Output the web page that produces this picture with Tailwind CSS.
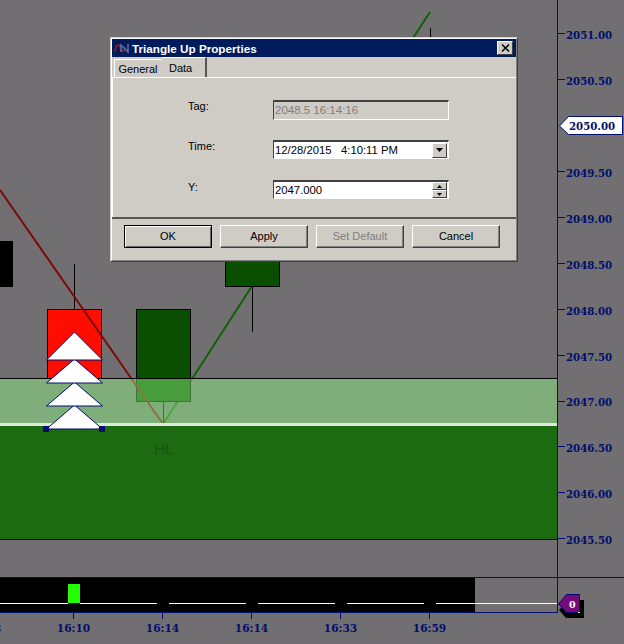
<!DOCTYPE html>
<html lang="en">
<head>
  <meta charset="UTF-8" />
  <title>Triangle Up Properties</title>
  <script src="https://cdn.jsdelivr.net/npm/@tailwindcss/browser@4"></script>
</head>
<body class="m-0 bg-[#716f71] overflow-hidden">
  <div class="relative w-[624px] h-[644px] overflow-hidden bg-[#716f71]">

    <!-- chart + price axis -->
    <div class="flex h-[577px]">
      <div class="relative w-[557px] h-[577px] overflow-hidden">
        <!-- green swing goes behind the candles -->
        <svg class="absolute left-0 top-0" width="557" height="577">
          <path d="M163 424L252 286L430 12" fill="none" stroke="#125f0a" stroke-width="2" />
        </svg>

        <!-- candles -->
        <div class="absolute left-[-10px] top-[241px] w-[23px] h-[46px] bg-black"></div>
        <div class="absolute left-[74px] top-[264px] w-px h-[45px] bg-black"></div>
        <div class="absolute left-[47px] top-[309px] w-[55px] h-[70px] bg-[#ff0d00] border border-black"></div>
        <div class="absolute left-[136px] top-[309px] w-[55px] h-[93px] bg-[#0a4f00] border border-black"></div>
        <div class="absolute left-[163px] top-[402px] w-px h-[22px] bg-black"></div>
        <div class="absolute left-[225px] top-[240px] w-[55px] h-[47px] bg-[#0a4f00] border border-black"></div>
        <div class="absolute left-[252px] top-[287px] w-px h-[45px] bg-black"></div>
        <div class="absolute left-[430px] top-[28px] w-px h-[14px] bg-black"></div>

        <svg class="absolute left-0 top-0" width="557" height="577">
          <path d="M0 190L163 424" fill="none" stroke="#7c0a0a" stroke-width="2" />
        </svg>

        <!-- zone -->
        <div class="absolute left-0 top-[378px] w-[557px] h-[162px] flex flex-col border-t border-b border-black">
          <div class="h-[44px] bg-[#93fb85]/45"></div>
          <div class="h-[3px] bg-[#dfe8dc]"></div>
          <div class="flex-1 bg-[#1d6b10]"></div>
        </div>
        <div class="absolute left-[154px] top-[440px] text-[15px] leading-[18px] text-[#14580c] font-['Liberation_Sans',sans-serif]">HL</div>

        <!-- triangle markers, bottom one first -->
        <svg class="absolute left-0 top-0" width="557" height="577">
          <g fill="#ffffff" stroke="#000e6e" stroke-width="1">
            <path d="M74.5 405L102.5 429H46.5Z" />
            <path d="M74.5 382L102.5 406H46.5Z" />
            <path d="M74.5 359L102.5 383H46.5Z" />
            <path d="M74.5 332L102.5 360H46.5Z" />
          </g>
          <rect x="43" y="426" width="6" height="6" fill="#000e6e" />
          <rect x="99" y="426" width="6" height="6" fill="#000e6e" />
        </svg>
      </div>

      <!-- price axis -->
      <div class="relative w-[67px] h-[577px] border-l border-[#000e6e] pt-[11px] text-[#000e6e] font-['DejaVu_Serif',serif] font-bold text-[10.2px]">
        <div class="flex items-center h-[45.9px]"><span class="w-[7px] h-px bg-[#000e6e] mr-px"></span><span class="relative top-[2px]">2051.00</span></div>
        <div class="flex items-center h-[45.9px]"><span class="w-[7px] h-px bg-[#000e6e] mr-px"></span><span class="relative top-[2px]">2050.50</span></div>
        <div class="relative flex items-center h-[45.9px]">
          <!-- current price tag -->
          <svg class="absolute left-[1px] top-[13px]" width="64" height="20"><path d="M0.5 10L9.5 0.5H63.5V18.5H9.5Z" fill="#ffffff" stroke="#000e6e" /></svg>
          <span class="relative top-[1px] ml-[11px]">2050.00</span>
        </div>
        <div class="flex items-center h-[45.9px]"><span class="w-[7px] h-px bg-[#000e6e] mr-px"></span><span class="relative top-[2px]">2049.50</span></div>
        <div class="flex items-center h-[45.9px]"><span class="w-[7px] h-px bg-[#000e6e] mr-px"></span><span class="relative top-[2px]">2049.00</span></div>
        <div class="flex items-center h-[45.9px]"><span class="w-[7px] h-px bg-[#000e6e] mr-px"></span><span class="relative top-[2px]">2048.50</span></div>
        <div class="flex items-center h-[45.9px]"><span class="w-[7px] h-px bg-[#000e6e] mr-px"></span><span class="relative top-[2px]">2048.00</span></div>
        <div class="flex items-center h-[45.9px]"><span class="w-[7px] h-px bg-[#000e6e] mr-px"></span><span class="relative top-[2px]">2047.50</span></div>
        <div class="flex items-center h-[45.9px]"><span class="w-[7px] h-px bg-[#000e6e] mr-px"></span><span class="relative top-[2px]">2047.00</span></div>
        <div class="flex items-center h-[45.9px]"><span class="w-[7px] h-px bg-[#000e6e] mr-px"></span><span class="relative top-[2px]">2046.50</span></div>
        <div class="flex items-center h-[45.9px]"><span class="w-[7px] h-px bg-[#000e6e] mr-px"></span><span class="relative top-[2px]">2046.00</span></div>
        <div class="flex items-center h-[45.9px]"><span class="w-[7px] h-px bg-[#000e6e] mr-px"></span><span class="relative top-[2px]">2045.50</span></div>
      </div>
    </div>

    <!-- indicator panel -->
    <div class="relative h-[36px] border-t border-[#000e6e]">
      <div class="flex h-[34px]">
        <div class="w-[475px] bg-black"></div>
      </div>
      <div class="absolute left-[68px] top-[6px] w-[12px] h-[19px] bg-[#22ff00]"></div>
      <div class="absolute left-0 top-[25px] w-[557px] flex h-px">
        <div class="w-[68px] bg-white"></div>
        <div class="w-[12px]"></div>
        <div class="w-[77px] bg-white"></div>
        <div class="w-[12px]"></div>
        <div class="w-[77px] bg-white"></div>
        <div class="w-[12px]"></div>
        <div class="w-[77px] bg-white"></div>
        <div class="w-[12px]"></div>
        <div class="w-[77px] bg-white"></div>
        <div class="w-[12px]"></div>
        <div class="flex-1 bg-white"></div>
      </div>
      <div class="w-[558px] h-px bg-[#000e6e]"></div>
      <div class="absolute left-[557px] top-[-1px] w-px h-[36px] bg-[#000e6e]"></div>

      <!-- zero tag -->
      <svg class="absolute left-[557px] top-[15px]" width="30" height="28">
        <path d="M2 17L8 11L11 7H27V25H9Z" fill="#000000" />
        <path d="M1.5 11L9.5 1.5H22.5V19.5H9.5Z" fill="#750a7a" stroke="#000e6e" />
        <rect x="21" y="19" width="2" height="1" fill="#ffffff" />
      </svg>
      <span class="absolute left-[569px] top-[20px] text-[9.5px] leading-[13px] font-bold text-white font-['DejaVu_Serif',serif]">0</span>
    </div>

    <!-- time axis -->
    <div class="flex ml-[-60px] text-[#000e6e] font-['DejaVu_Serif',serif] font-bold text-[10.6px]">
      <div class="flex flex-col items-center w-[89px]"><span class="w-px h-[6px] bg-[#000e6e]"></span><span class="mt-[3px] leading-[13px]">16:08</span></div>
      <div class="flex flex-col items-center w-[89px]"><span class="w-px h-[6px] bg-[#000e6e]"></span><span class="mt-[3px] leading-[13px]">16:10</span></div>
      <div class="flex flex-col items-center w-[89px]"><span class="w-px h-[6px] bg-[#000e6e]"></span><span class="mt-[3px] leading-[13px]">16:14</span></div>
      <div class="flex flex-col items-center w-[89px]"><span class="w-px h-[6px] bg-[#000e6e]"></span><span class="mt-[3px] leading-[13px]">16:14</span></div>
      <div class="flex flex-col items-center w-[89px]"><span class="w-px h-[6px] bg-[#000e6e]"></span><span class="mt-[3px] leading-[13px]">16:33</span></div>
      <div class="flex flex-col items-center w-[89px]"><span class="w-px h-[6px] bg-[#000e6e]"></span><span class="mt-[3px] leading-[13px]">16:59</span></div>
    </div>

    <!-- properties dialog -->
    <div class="absolute left-[110px] top-[37px] w-[408px] h-[225px] border border-[#d4d0c8] border-r-[#404040] border-b-[#404040] font-['Liberation_Sans',sans-serif] text-[11px] leading-[13px] text-black">
      <div class="h-full border border-white border-r-[#808080] border-b-[#808080] bg-[#cfccc6] flex flex-col">
        <!-- title bar -->
        <div class="flex items-center h-[18px] bg-[#001b5c] pl-[2px] pr-[1px]">
          <svg width="17" height="14" viewBox="0 0 17 14" fill="none">
            <path d="M1 11C2 3 5 2 6.500 7C8 12 10 11 11 6" stroke="#8a1a1a" stroke-width="2" />
            <path d="M7 11V4L14 11V3" stroke="#5a6fa8" stroke-width="1.500" />
          </svg>
          <span class="ml-[1px] text-white font-bold text-[11.7px]">Triangle Up Properties</span>
          <div class="ml-auto mr-[2px] w-[16px] h-[14px] bg-[#cfccc6] border border-white border-r-[#404040] border-b-[#404040] flex items-center justify-center">
            <svg width="9" height="8" viewBox="0 0 9 8"><path d="M1 0.500L8 7.500M8 0.500L1 7.500" stroke="#000" stroke-width="1.500" /></svg>
          </div>
        </div>

        <!-- tabs -->
        <div class="flex items-end h-[21px] pl-[2px] border-b border-white">
          <div class="w-[48px] h-[18px] border border-b-0 border-white border-r-[#cfccc6] text-center leading-[19px]">General</div>
          <div class="w-[45px] h-[20px] border-t border-white border-r-2 border-r-[#555555] pl-[7px] leading-[20px]">Data</div>
        </div>

        <!-- form rows -->
        <div class="flex-1 pl-[75px] pt-[22px] flex flex-col gap-[20px] border-l border-white">
          <div class="flex h-[20px]">
            <span class="w-[85px]">Tag:</span>
            <div class="w-[176px] h-[20px] border border-[#404040] border-r-white border-b-white border-t-2 pl-[1px] leading-[17px] text-[#807e7c] text-[11.5px]">2048.5 16:14:16</div>
          </div>
          <div class="flex h-[19px]">
            <span class="w-[85px]">Time:</span>
            <div class="w-[176px] h-[19px] border border-[#404040] border-r-white border-b-white border-t-2 bg-white pl-[1px] pr-px flex items-center justify-between whitespace-pre text-[11.3px]">
              <span>12/28/2015   4:10:11 PM</span>
              <div class="w-[15px] h-[15px] bg-[#cfccc6] border border-white border-r-[#404040] border-b-[#404040] flex items-center justify-center">
                <svg width="7" height="4"><path d="M0 0H7L3.500 4Z" fill="#000" /></svg>
              </div>
            </div>
          </div>
          <div class="flex h-[19px] mt-[1px]">
            <span class="w-[85px] pt-[1px]">Y:</span>
            <div class="w-[176px] h-[19px] border border-[#404040] border-r-white border-b-white border-t-2 bg-white pl-[1px] pr-px flex items-center justify-between text-[11.3px]">
              <span>2047.000</span>
              <div class="flex flex-col w-[15px]">
                <div class="h-[8px] bg-[#cfccc6] border border-white border-r-[#404040] border-b-[#404040] flex items-center justify-center"><svg width="5" height="3"><path d="M2.500 0L5 3H0Z" fill="#000" /></svg></div>
                <div class="h-[8px] bg-[#cfccc6] border border-white border-r-[#404040] border-b-[#404040] flex items-center justify-center"><svg width="5" height="3"><path d="M0 0H5L2.500 3Z" fill="#000" /></svg></div>
              </div>
            </div>
          </div>
        </div>

        <!-- buttons -->
        <div class="h-[43px] border-t-2 border-[#555555] pl-[12px] pt-[6px] flex gap-[8px]">
          <button class="w-[88px] h-[23px] bg-[#cfccc6] border border-black shadow-[inset_1px_1px_0_#ffffff,inset_-1px_-1px_0_#666666] text-center">OK</button>
          <button class="w-[88px] h-[23px] bg-[#cfccc6] border border-white border-r-[#404040] border-b-[#404040] shadow-[inset_-1px_-1px_0_#808080] text-center">Apply</button>
          <button class="w-[88px] h-[23px] bg-[#cfccc6] border border-white border-r-[#404040] border-b-[#404040] shadow-[inset_-1px_-1px_0_#808080] text-center text-[#807e7c]">Set Default</button>
          <button class="w-[88px] h-[23px] bg-[#cfccc6] border border-white border-r-[#404040] border-b-[#404040] shadow-[inset_-1px_-1px_0_#808080] text-center">Cancel</button>
        </div>
      </div>
    </div>
  </div>
</body>
</html>
